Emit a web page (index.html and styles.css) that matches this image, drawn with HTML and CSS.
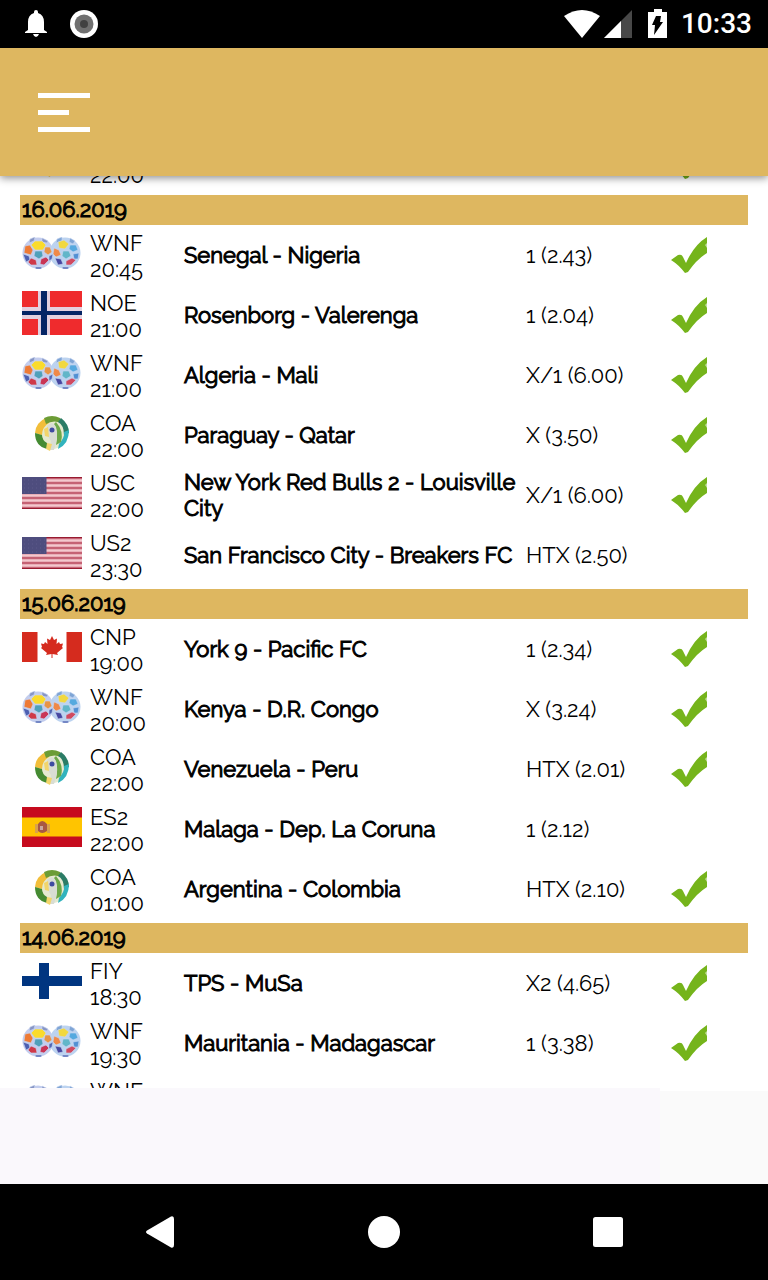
FILE: index.html
```html
<!DOCTYPE html>
<html lang="en">
<head>
    <meta charset="UTF-8">
    <meta name="viewport" content="width=device-width, initial-scale=1.0">
    <title>Tips</title>
    <link rel="stylesheet" href="styles.css">
</head>
<body>
    <!-- Shared icons -->
    <svg class="sprites" aria-hidden="true">
        <symbol id="check" viewBox="0 0 40 40">
            <path d="M3 26 L10 21 Q14 20 15 23 L18 29 Q26 11 39 3 V19 Q29 25 20 38 L17 39 Q11 31 3 26Z" fill="#75b41b"/>
            <path d="M37 11 l2-2 v5z" fill="#c3df9d"/>
        </symbol>
        <symbol id="wnf" viewBox="0 0 60 32">
            <circle cx="16" cy="16" r="15.500" fill="#c3cdee"/>
            <circle cx="43" cy="16" r="15.500" fill="#bcd3f0"/>
            <g stroke="#c9d6f2" stroke-width=".6">
                <path d="M8 2 L13 0 12 4 7 6Z M20 1 L26 4 25 6 20 5Z" fill="#8795c4"/>
                <path d="M13 4 H20 L24 8 21 13 H13 L9 8Z" fill="#fadb2c"/>
                <path d="M13 14 L20 14 21 19 17 22 12 19Z" fill="#4fa0ba"/>
                <path d="M3 9 L8 8 11 13 9 18 2 16Z" fill="#ee7a35"/>
                <path d="M23 10 L28 10 30 15 26 18 22 15Z" fill="#e89447"/>
                <path d="M1 17 L7 19 8 23 4 25Z" fill="#4c5fb2"/>
                <path d="M9 21 L14 23 15 28 9 28 6 25Z" fill="#cf3949"/>
                <path d="M19 22 L24 20 27 23 22 28 18 27Z" fill="#c93556"/>
                <path d="M27 19 L31 17 30 22 27 24Z M13 30 H20 L19 32 H14Z" fill="#5066b3"/>
                <path d="M35 2 L40 0 40 4 34 6Z M48 1 L53 4 51 7 47 5Z" fill="#7fa5d5"/>
                <path d="M36 5 L42 3 47 7 43 12 37 11Z" fill="#f1d840"/>
                <path d="M48 8 L54 8 56 13 51 15 47 12Z" fill="#55a9df"/>
                <path d="M32 11 L37 13 39 18 34 20 31 17Z" fill="#ef8948"/>
                <path d="M41 14 L47 14 49 19 44 22 40 19Z" fill="#62b6c9"/>
                <path d="M51 17 L57 16 56 22 52 22Z" fill="#5290d3"/>
                <path d="M33 21 L39 22 41 27 36 28Z" fill="#4648a1"/>
                <path d="M44 24 L50 21 54 23 49 28 44 28Z" fill="#d14a60"/>
                <path d="M40 30 H47 L46 32 H41Z" fill="#5066b3"/>
            </g>
        </symbol>
        <symbol id="coa" viewBox="0 0 60 36">
            <circle cx="30" cy="18" r="16" fill="#e5e9cf"/>
            <path d="M13 18 A17 17 0 0 1 24 3 L27 8 Q20 12 20 20Z" fill="#f2be3a"/>
            <path d="M22 3 Q30 -1 38 3 L42 9 Q32 4 24 9Z" fill="#6c9c35"/>
            <path d="M13 18 Q13 31 25 34 L25 28 Q20 25 20 20Z" fill="#458b32"/>
            <path d="M39 3 Q47 9 47 18 L42 20 Q42 10 36 7Z" fill="#2b7c66"/>
            <path d="M47 15 Q47 29 36 34 L37 29 Q43 22 42 17Z" fill="#31b3bd"/>
            <path d="M34 7 Q42 16 39 27 L34 30 Q37 17 32 9Z" fill="#6da848"/>
            <path d="M25 11 Q30 5 34 12 Q37 21 32 35 H28 L29 26 Q24 20 25 11Z" fill="#d9ddd4"/>
            <path d="M22 14 l4-2 1 10 -4-1z M25 28 l5 1 -2 7 -4-2z" fill="#f2d56b"/>
            <circle cx="30" cy="15" r="2.5" fill="#3f4ba1"/>
        </symbol>
        <symbol id="norway" viewBox="0 0 60 44">
            <path d="M0 0h60v44H0z" fill="#ef2b2d"/>
            <path d="M16 0h12v44H16z M0 16h60v12H0z" fill="#e3d0df"/>
            <path d="M19 0h6v44h-6z M0 20h60v4H0z" fill="#052565"/>
        </symbol>
        <symbol id="usa" viewBox="0 0 60 32">
            <path d="M0 0h60v32H0z" fill="#f3c8ce"/>
            <path d="M0 1h60M0 6h60M0 11h60M0 16h60M0 21h60M0 26h60M0 31h60" stroke="#c56274" stroke-width="2.5"/>
            <path d="M0 .5h60M0 31.5h60" stroke="#981b31"/>
            <path d="M0 0h24.500v17H0z" fill="#4e4d7e"/>
            <path d="M2 3h22M2 7h22M2 11h22M2 15h22" stroke="#5c5a8a" stroke-dasharray="1 3"/>
        </symbol>
        <symbol id="canada" viewBox="0 0 60 30">
            <path d="M0 0h60v30H0z" fill="#fff"/>
            <path d="M0 0h15.500v30H0z M44.500 0H60v30H44.500z" fill="#d52b1e"/>
            <path d="M30 4 L32 8 35 6.500 34.500 12 37 10 38 12 41 11.500 40 15 41 16 35 21 36 23 30.500 22 V26 H29.500 V22 L24 23 25 21 19 16 20 15 19 11.500 22 12 23 10 25.500 12 25 6.500 28 8Z" fill="#d52b1e"/>
        </symbol>
        <symbol id="spain" viewBox="0 0 60 40">
            <path d="M0 0h60v40H0z" fill="#c60b1e"/>
            <path d="M0 10.500h60v19H0z" fill="#ffc400"/>
            <path d="M13 17h3v9h-3z M25 17h3v9h-3z" fill="#d9a24a"/>
            <path d="M16 17 Q20 11 25 17 V24 Q20 28 16 24Z" fill="#a85843"/>
            <path d="M18 19h3v4h-3z" fill="#c9a7a1"/>
        </symbol>
        <symbol id="finland" viewBox="0 0 60 36">
            <path d="M0 0h60v36H0z" fill="#fff"/>
            <path d="M17 0h10v36H17z M0 13h60v10H0z" fill="#003580"/>
        </symbol>
    </svg>

    <!-- Status bar -->
    <div class="status-bar">
        <svg class="bell" width="24" height="28" viewBox="0 0 24 28"><path d="M12 0a2 2 0 0 1 2 2v1q6 2 6 9v8l3 2v1H1v-1l3-2v-8q0-7 6-9V2a2 2 0 0 1 2-2z M9 24h6q-1 3-3 3t-3-3z" fill="#fff"/></svg>
        <svg width="28" height="28" viewBox="0 0 28 28"><circle cx="14" cy="14" r="14" fill="#fff"/><circle cx="14" cy="14" r="9.500" fill="#707070"/><circle cx="14" cy="14" r="4" fill="#414141"/></svg>
        <div class="status-right">
            <svg width="36" height="28" viewBox="0 0 36 28"><path d="M0 6q18-12 36 0L18 28z" fill="#fff"/></svg>
            <svg class="signal" width="28" height="28" viewBox="0 0 28 28"><path d="M28 0v28H0z" fill="#484848"/><path d="M17 11v17H0z" fill="#fff"/></svg>
            <svg class="battery" width="20" height="30" viewBox="0 0 20 30"><path d="M6 0h8v3h5v26H0V3h6z" fill="#fff"/><path d="M8 7h5l-1 6h3L6 26l1-10H4z" fill="#000"/></svg>
            <span class="clock">10:33</span>
        </div>
    </div>

    <header>
        <button class="menu-btn" type="button" aria-label="Menu">
            <span></span>
            <span class="short"></span>
            <span></span>
        </button>
    </header>

    <!-- Tips by date -->
    <main id="tips">
        <table>
            <tr><td class="flag"><svg class="coa"><use href="#coa"/></svg></td><td class="league">COA<br>22:00</td><td class="match"></td><td class="tip"></td><td class="result"><svg><use href="#check"/></svg></td></tr>
        </table>

        <h2>16.06.2019</h2>
        <table>
            <tr><td class="flag"><svg class="wnf"><use href="#wnf"/></svg></td><td class="league">WNF<br>20:45</td><td class="match">Senegal - Nigeria</td><td class="tip">1 (2.43)</td><td class="result"><svg><use href="#check"/></svg></td></tr>
            <tr><td class="flag"><svg class="norway"><use href="#norway"/></svg></td><td class="league">NOE<br>21:00</td><td class="match">Rosenborg - Valerenga</td><td class="tip">1 (2.04)</td><td class="result"><svg><use href="#check"/></svg></td></tr>
            <tr><td class="flag"><svg class="wnf"><use href="#wnf"/></svg></td><td class="league">WNF<br>21:00</td><td class="match">Algeria - Mali</td><td class="tip">X/1 (6.00)</td><td class="result"><svg><use href="#check"/></svg></td></tr>
            <tr><td class="flag"><svg class="coa"><use href="#coa"/></svg></td><td class="league">COA<br>22:00</td><td class="match">Paraguay - Qatar</td><td class="tip">X (3.50)</td><td class="result"><svg><use href="#check"/></svg></td></tr>
            <tr><td class="flag"><svg class="usa"><use href="#usa"/></svg></td><td class="league">USC<br>22:00</td><td class="match">New York Red Bulls 2 - Louisville City</td><td class="tip">X/1 (6.00)</td><td class="result"><svg><use href="#check"/></svg></td></tr>
            <tr><td class="flag"><svg class="usa"><use href="#usa"/></svg></td><td class="league">US2<br>23:30</td><td class="match">San Francisco City - Breakers FC</td><td class="tip">HTX (2.50)</td><td class="result"></td></tr>
        </table>

        <h2>15.06.2019</h2>
        <table>
            <tr><td class="flag"><svg class="canada"><use href="#canada"/></svg></td><td class="league">CNP<br>19:00</td><td class="match">York 9 - Pacific FC</td><td class="tip">1 (2.34)</td><td class="result"><svg><use href="#check"/></svg></td></tr>
            <tr><td class="flag"><svg class="wnf"><use href="#wnf"/></svg></td><td class="league">WNF<br>20:00</td><td class="match">Kenya - D.R. Congo</td><td class="tip">X (3.24)</td><td class="result"><svg><use href="#check"/></svg></td></tr>
            <tr><td class="flag"><svg class="coa"><use href="#coa"/></svg></td><td class="league">COA<br>22:00</td><td class="match">Venezuela - Peru</td><td class="tip">HTX (2.01)</td><td class="result"><svg><use href="#check"/></svg></td></tr>
            <tr><td class="flag"><svg class="spain"><use href="#spain"/></svg></td><td class="league">ES2<br>22:00</td><td class="match">Malaga - Dep. La Coruna</td><td class="tip">1 (2.12)</td><td class="result"></td></tr>
            <tr><td class="flag"><svg class="coa"><use href="#coa"/></svg></td><td class="league">COA<br>01:00</td><td class="match">Argentina - Colombia</td><td class="tip">HTX (2.10)</td><td class="result"><svg><use href="#check"/></svg></td></tr>
        </table>

        <h2>14.06.2019</h2>
        <table>
            <tr><td class="flag"><svg class="finland"><use href="#finland"/></svg></td><td class="league">FIY<br>18:30</td><td class="match">TPS - MuSa</td><td class="tip">X2 (4.65)</td><td class="result"><svg><use href="#check"/></svg></td></tr>
            <tr><td class="flag"><svg class="wnf"><use href="#wnf"/></svg></td><td class="league">WNF<br>19:30</td><td class="match">Mauritania - Madagascar</td><td class="tip">1 (3.38)</td><td class="result"><svg><use href="#check"/></svg></td></tr>
            <tr><td class="flag"><svg class="wnf"><use href="#wnf"/></svg></td><td class="league">WNF<br>&nbsp;</td><td class="match"></td><td class="tip"></td><td class="result"></td></tr>
        </table>
    </main>

    <div class="banner">
        <div class="banner-ad"></div>
        <div class="banner-rest"></div>
    </div>

    <nav class="nav-bar">
        <button type="button" aria-label="Back"><svg width="32" height="32" viewBox="0 0 32 32"><path d="M3 14.500 L27 .5 Q30 -.5 30 3 V29 Q30 32.500 27 31.500 L3 17.500 Q1 16 3 14.500Z" fill="#fff"/></svg></button>
        <button type="button" aria-label="Home"><svg width="32" height="32" viewBox="0 0 32 32"><circle cx="16" cy="16" r="16" fill="#fff"/></svg></button>
        <button type="button" aria-label="Recent apps"><svg width="32" height="32" viewBox="0 0 32 32"><rect x="1" y="1" width="30" height="30" rx="2.500" fill="#fff"/></svg></button>
    </nav>

    <script>
        document.getElementById("tips").scrollTop = 45;
    </script>
</body>
</html>
```
FILE: styles.css
```css
* {
    box-sizing: border-box;
}
body {
    font-family: Raleway, Lato, sans-serif;
    font-size: 22px;
    line-height: 26px;
    color: #000;
    background-color: #fff;
    margin: 0;
    display: flex;
    flex-direction: column;
    height: 100vh;
}
.sprites {
    position: absolute;
    width: 0;
    height: 0;
}
button {
    background: none;
    border: none;
    padding: 0;
    cursor: pointer;
}
svg {
    display: block;
}

/* Status bar */
.status-bar {
    display: flex;
    align-items: center;
    flex-shrink: 0;
    gap: 22px;
    height: 48px;
    padding: 0 16px 0 24px;
    background-color: #000;
    color: #fff;
}
.status-right {
    display: flex;
    align-items: center;
    margin-left: auto;
}
.signal {
    margin-left: 4px;
}
.battery {
    margin: 0 13px 0 16px;
}
.clock {
    font-family: Roboto, sans-serif;
    font-size: 28px;
    font-weight: 500;
}

/* Header */
header {
    display: flex;
    align-items: center;
    flex-shrink: 0;
    height: 128px;
    padding: 0 38px;
    background-color: #deb760;
    box-shadow: 0 2px 8px rgba(0, 0, 0, 0.45);
    z-index: 1;
}
.menu-btn {
    display: flex;
    flex-direction: column;
    gap: 12px;
    width: 52px;
}
.menu-btn span {
    width: 100%;
    height: 5px;
    background-color: #fff;
}
.menu-btn .short {
    width: 60%;
}

/* Tips list */
main {
    flex: 1;
    min-height: 0;
    padding: 0 20px;
    overflow-y: auto;
    scrollbar-width: none;
}
h2 {
    margin: 0;
    padding: 1px 2px 3px;
    font-size: 22px;
    font-weight: 400;
    -webkit-text-stroke: 1px #000;
    background-color: #deb760;
}
table {
    width: 100%;
    margin-bottom: 2px;
    border-spacing: 2px;
    table-layout: fixed;
}
td {
    padding: 2px 0 4px 6px;
    height: 58px;
}
.flag {
    width: 60px;
    padding: 0 0 6px;
}
.flag svg {
    width: 60px;
    height: 32px;
}
.flag .coa,
.flag .finland {
    height: 36px;
}
.flag .norway {
    height: 44px;
}
.flag .canada {
    height: 30px;
}
.flag .spain {
    height: 40px;
}
.league {
    width: 92px;
    padding: 3px 0 3px 6px;
}
.match {
    -webkit-text-stroke: 1px #000;
}
.tip {
    width: 140px;
}
.result {
    width: 84px;
    padding-bottom: 6px;
}
.result svg {
    width: 40px;
    height: 40px;
}

/* Banner */
.banner {
    display: flex;
    flex-shrink: 0;
    height: 96px;
}
.banner-ad {
    width: 86%;
    background-color: #faf8fc;
}
.banner-rest {
    flex: 1;
    border-top: 3px solid #fff;
    background-color: #fafafa;
}

/* Navigation bar */
.nav-bar {
    display: flex;
    justify-content: center;
    align-items: center;
    flex-shrink: 0;
    gap: 192px;
    height: 96px;
    background-color: #000;
}
```
